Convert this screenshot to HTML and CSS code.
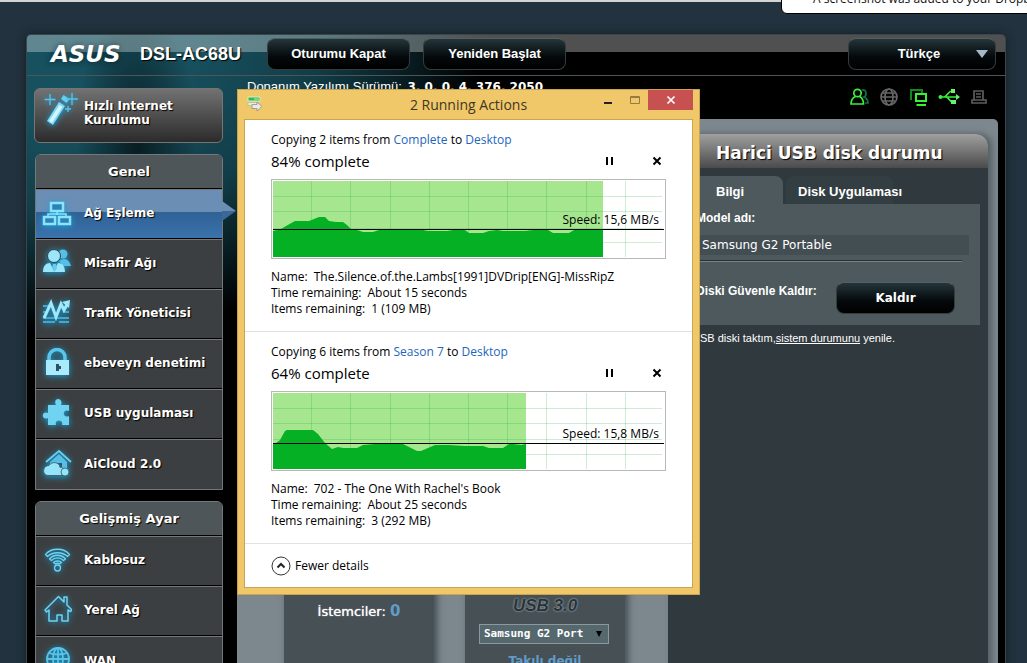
FILE: index.html
```html
<!DOCTYPE html>
<html lang="tr">
<head>
<meta charset="utf-8">
<title>ASUS DSL-AC68U</title>
<link rel="stylesheet" href="styles.css">
</head>
<body>
<div class="toast">A screenshot was added to your Dropbox</div>
<div class="router">
  <header class="top">
    <span class="logo">ASUS</span>
    <h1 class="model">DSL-AC68U</h1>
    <button class="pill">Oturumu Kapat</button>
    <button class="pill">Yeniden Başlat</button>
    <div class="lang">
      <select class="pill" aria-label="Dil"><option>Türkçe</option></select>
      <svg class="caret" viewBox="0 0 12 8"><path d="M0 0h12L6 8z" fill="#a3bac9"/></svg>
    </div>
  </header>
  <div class="columns">
    <nav class="side">
      <a class="quick" href="#">
        <svg class="icon" viewBox="0 0 34 34"><path d="M3 28 15 9l6 4L9 32z" fill="#7fd8f5"/><path d="M5 28 15.500 12l3 2L8 30z" fill="#d4f6ff"/><path d="M17 6l2.500-4 6 4-3 4z" fill="#62d0f5"/><path d="M6 1v11M.5 6.500h11M28 0v12M22 6h12M24 13v6M21 16h6" stroke="#53c8ec" stroke-width="1.300"/></svg>
        <span>Hızlı Internet Kurulumu</span>
      </a>
      <section class="menu">
        <h2>Genel</h2>
        <a class="active" href="#"><svg class="icon" viewBox="0 0 30 30"><path d="M9 5h12v8H9zM2 19h11v7H2zM17 19h11v7H17z" fill="#2c82b8" stroke="#8ce4fb" stroke-width="2.500"/><path d="M15 14v3M6 18v-2h18v2" fill="none" stroke="#8ce4fb" stroke-width="1.500"/></svg>Ağ Eşleme</a>
        <a href="#"><svg class="icon" viewBox="0 0 30 30"><circle cx="21" cy="6" r="4.500" fill="#55bfe5"/><path d="M17 13c7-4 10-1 12 5h-8z" fill="#55bfe5"/><circle cx="12" cy="8" r="6.500" fill="#9be6fa" stroke="#3b3f41"/><path d="M1 24c0-6 3-9 7-9l4 8 4-8c5 0 7 4 7 9z" fill="#9be6fa"/><path d="M11 16h3l1 4-2.500 4L10 20z" fill="#65cdf0"/></svg>Misafir Ağı</a>
        <a href="#"><svg class="icon" viewBox="0 0 30 30"><path d="M1 8h7M21 14h6M1 14h5M1 20h26M1 24h12M17 24h10" stroke="#3fa9d0" stroke-width="2"/><path d="M2 20 9 5l5 14 5-13 3 6 4-7" fill="none" stroke="#a0e9fb" stroke-width="3"/><path d="M20 4l8-2-1 8z" fill="#a0e9fb"/></svg>Trafik Yöneticisi</a>
        <a href="#"><svg class="icon" viewBox="0 0 30 30"><path d="M7 13V9.500a8 8 0 0 1 16 0V13" fill="none" stroke="#59c7eb" stroke-width="3.500"/><path d="M4 12h23v15H4z" fill="#a9ebfb"/><path d="M14 16h3v2h2v3h-2v2h-3z" fill="#2c5261"/></svg>ebeveyn denetimi</a>
        <a href="#"><svg class="icon" viewBox="0 0 30 30"><path d="M6 7h8c-4-8 8-8 5 0h8v6c-7-3-7 8 0 5v9h-7c2-6-8-6-6 0H6v-7c-7 3-7-8 0-5z" fill="#70d3f2"/></svg>USB uygulaması</a>
        <a href="#"><svg class="icon" viewBox="0 0 30 30"><path d="M4 13 17 2l12 11" fill="none" stroke="#65cdef" stroke-width="2"/><path d="M8 13l9-8 8 8v9H8z" fill="#55bfe5"/><path d="M14 14h6v4h-6z" fill="#31576a"/><path d="M6 26.500c-6 0-6-10 1-10 3-5 11-3 11 2 3-1 4 2 3 4 5-1 6 4 1 4z" fill="#96e4f8" stroke="#345666" stroke-width=".8"/><circle cx="23" cy="23" r="4" fill="#96e4f8" stroke="#345666" stroke-width=".8"/></svg>AiCloud 2.0</a>
      </section>
      <section class="menu">
        <h2>Gelişmiş Ayar</h2>
        <a href="#"><svg class="icon" viewBox="0 0 30 30"><g fill="none" stroke="#6fd3f3" stroke-width="1.300" stroke-linejoin="round"><path d="M3.500 9.500c6-7 18-7 24 0l-2 2c-5-5-15-5-20 0z"/><path d="M7.500 14c4-5 12-5 16 0l-2 1.500c-3-3.500-9-3.500-12 0z"/><path d="M11.500 17.500c2-2 6-2 8 0l-2 1.500c-1-1-3-1-4 0z"/><circle cx="15.500" cy="23" r="3"/></g></svg>Kablosuz</a>
        <a href="#"><svg class="icon" viewBox="0 0 30 30"><path d="M3 15 16.500 1.500 22 7V2h3v8l5 5-1.500 1.500L26 15v11h-6v-6h-5v6H7V15l-2.500 2z" fill="none" stroke="#6fd3f3" stroke-width="1.500" stroke-linejoin="round"/></svg>Yerel Ağ</a>
        <a href="#"><svg class="icon" viewBox="0 0 30 30"><g fill="none" stroke="#58c4e9" stroke-width="1.800"><circle cx="16" cy="13" r="11"/><ellipse cx="16" cy="13" rx="5" ry="11"/><path d="M16 2v22M5 13h22M7 7c5 2 13 2 18 0M7 19c5-2 13-2 18 0"/></g></svg>WAN</a>
      </section>
    </nav>
    <main class="main">
      <div class="info">
        <span class="firmware">Donanım Yazılımı Sürümü: <b>3. 0. 0. 4. 376. 2050</b></span>
        <div class="status">
          <svg viewBox="0 0 22 20"><g fill="none" stroke-width="1.700"><path d="M14 3c5-1 5 6 2 7 2 1 4 3 4 6h-3" stroke="#0d7346"/><circle cx="9.500" cy="6" r="3.700" stroke="#3cf03c"/><path d="M7.500 9.500C4 11 3 13 3 17h12.500c0-4-1-6-4-7.500" stroke="#3cf03c"/></g></svg>
          <svg viewBox="0 0 22 20"><g fill="none" stroke="#666" stroke-width="1.700"><circle cx="11" cy="10" r="8"/><ellipse cx="11" cy="10" rx="4" ry="8"/><path d="M3 10h16M4.500 6h13M4.500 14h13"/></g></svg>
          <svg viewBox="0 0 22 20"><path d="M4 12H3V3h11v3" fill="none" stroke="#0e8a1c" stroke-width="2"/><path d="M8 7h10v7H8zM8.500 18H18" fill="none" stroke="#35f335" stroke-width="2"/></svg>
          <svg viewBox="0 0 22 20"><g fill="none" stroke="#36f13a" stroke-width="1.700"><path d="M2 10h17M6 10c3 0 4-6 8-6M8 10c3 0 3 5 7 5"/></g><path d="M22 10l-4-3v6zM13 2h4v4h-4zM13 13h5v4h-5z" fill="#66f56a"/><circle cx="2.500" cy="10" r="2" fill="#36f13a"/></svg>
          <svg viewBox="0 0 22 20"><path d="M6 13V4h9v9M4 13h14v3H4zM8 7h5M8 10h5" fill="none" stroke="#5c5c5c" stroke-width="1.700"/></svg>
        </div>
      </div>
      <div class="board">
        <div class="map">
          <div class="card"><p class="clients">İstemciler: <b>0</b></p></div>
          <div class="card">
            <p class="usb">USB 3.0</p>
            <div class="disk">
              <select aria-label="USB 3.0"><option>Samsung G2 Port</option></select>
              <svg viewBox="0 0 6 6"><path d="M0 0h6L3 6z"/></svg>
            </div>
            <p class="none">Takılı değil</p>
          </div>
        </div>
        <section class="panel">
          <h2>Harici USB disk durumu</h2>
          <div class="tabs"><button class="on">Bilgi</button><button>Disk Uygulaması</button></div>
          <div class="sheet">
            <p class="label">Model adı:</p>
            <p class="value">Samsung G2 Portable</p>
            <div class="eject"><label class="label" for="eject">Diski Güvenle Kaldır:</label><button class="pill" id="eject">Kaldır</button></div>
          </div>
          <p class="note">USB diski taktım,<a href="#">sistem durumunu</a> yenile.</p>
        </section>
      </div>
    </main>
  </div>
</div>

<div class="window" role="dialog" aria-labelledby="wt" lang="en">
  <div class="titlebar">
    <svg class="app" viewBox="0 0 16 16"><path d="M1 1h12v4H1z" fill="#35b845" stroke="#d7efd4"/><path d="M7 3h5" stroke="#b6f5b0"/><path d="M1 6.500h9v3H1z" fill="#e4eee0" stroke="#a3b69b" stroke-width=".6"/><path d="M5 8.500h5V6l5 4.500-5 4.500v-2.500H5z" fill="#e9e9e9" stroke="#8f8f8f" stroke-width=".8"/></svg>
    <span id="wt">2 Running Actions</span>
    <div class="controls">
      <button aria-label="Minimize"><svg viewBox="0 0 12 12"><path d="M2 9h8" stroke="#222" stroke-width="2"/></svg></button>
      <button aria-label="Maximize"><svg viewBox="0 0 12 12"><path d="M1.500 2.500h9v7h-9zM1.500 3.500h9" fill="none" stroke="#967b3d"/></svg></button>
      <button class="close" aria-label="Close"><svg viewBox="0 0 12 12"><path d="M2.500 2.500l7 7M9.500 2.500l-7 7" stroke="#fff" stroke-width="1.700"/></svg></button>
    </div>
  </div>
  <div class="client">
    <section class="job">
      <p>Copying 2 items from <a href="#">Complete</a> to <a href="#">Desktop</a></p>
      <div class="progress"><span>84% complete</span>
        <button aria-label="Pause"><svg viewBox="0 0 12 12"><path d="M3 2v8M8 2v8" stroke="#000" stroke-width="2"/></svg></button>
        <button aria-label="Cancel"><svg viewBox="0 0 12 12"><path d="M2.500 2.500l7 7M9.500 2.500l-7 7" stroke="#000" stroke-width="2"/></svg></button>
      </div>
      <div class="graph">
        <svg viewBox="0 0 391 76" preserveAspectRatio="none">
          <path d="M0 0h330v76H0z" fill="#a6e68f"/>
          <path d="M0 15.500h389M0 30.500h389M0 47.500h389M0 61.500h389M38.500 0v76M77.500 0v76M117.500 0v76M156.500 0v76M195.500 0v76M234.500 0v76M273.500 0v76M313.500 0v76M352.500 0v76" fill="none" stroke="#06a02c" stroke-opacity=".2"/>
          <path d="M0 50 8 48 13 45 22 40H36L46 36H52L56 40 63 41H70L74 44 79 49H84L90 51H100L106 49H150L155 50H174L180 49H192L196 52H210L216 50 224 49 230 50H252L260 49H275L280 52H296L301 49H330V76H0Z" fill="#06b025"/>
          <path d="M0 48.500h391" stroke="#000"/>
        </svg>
        <span>Speed: 15,6 MB/s</span>
      </div>
      <dl><div><dt>Name:</dt><dd>The.Silence.of.the.Lambs[1991]DVDrip[ENG]-MissRipZ</dd></div><div><dt>Time remaining:</dt><dd>About 15 seconds</dd></div><div><dt>Items remaining:</dt><dd>1 (109 MB)</dd></div></dl>
    </section>
    <section class="job low">
      <p>Copying 6 items from <a href="#">Season 7</a> to <a href="#">Desktop</a></p>
      <div class="progress"><span>64% complete</span>
        <button aria-label="Pause"><svg viewBox="0 0 12 12"><path d="M3 2v8M8 2v8" stroke="#000" stroke-width="2"/></svg></button>
        <button aria-label="Cancel"><svg viewBox="0 0 12 12"><path d="M2.500 2.500l7 7M9.500 2.500l-7 7" stroke="#000" stroke-width="2"/></svg></button>
      </div>
      <div class="graph">
        <svg viewBox="0 0 391 76" preserveAspectRatio="none">
          <path d="M0 0h253v76H0z" fill="#a6e68f"/>
          <path d="M0 15.500h389M0 30.500h389M0 46.500h389M0 61.500h389M38.500 0v76M77.500 0v76M117.500 0v76M156.500 0v76M195.500 0v76M234.500 0v76M273.500 0v76M313.500 0v76M352.500 0v76" fill="none" stroke="#06a02c" stroke-opacity=".2"/>
          <path d="M0 50H3L7 47 12 38 14 37H40L45 41 52 50 59 56 65 54 70 55H84L90 52 102 51H130L136 54 144 58H148L155 55 162 52H176L192 53H210L216 55H230L236 51H240L248 52 253 51V76H0Z" fill="#06b025"/>
          <path d="M0 50.500h391" stroke="#000"/>
        </svg>
        <span>Speed: 15,8 MB/s</span>
      </div>
      <dl><div><dt>Name:</dt><dd>702 - The One With Rachel's Book</dd></div><div><dt>Time remaining:</dt><dd>About 25 seconds</dd></div><div><dt>Items remaining:</dt><dd>3 (292 MB)</dd></div></dl>
    </section>
    <button class="fewer"><svg viewBox="0 0 20 20"><circle cx="10" cy="10" r="9" fill="none" stroke="#333"/><path d="M6.500 11.500 10 8l3.500 3.500" fill="none" stroke="#222" stroke-width="2"/></svg>Fewer details</button>
  </div>
</div>
</body>
</html>
```
FILE: styles.css
```css
* { box-sizing: border-box; }
body {
  margin: 0;
  height: 100vh;
  overflow: hidden;
  padding: 32px 21px 0 26px;
  border-top: 2px solid #d4d6d6;
  background: #22323e;
  color: #fff;
  font-family: "DejaVu Sans", Verdana, sans-serif;
  font-size: 12px;
}
h1, h2, p, dl, dd { margin: 0; }
button, select { font: inherit; color: inherit; border: 0; background: none; padding: 0; }
a { color: inherit; text-decoration: none; }

.toast {
  position: absolute;
  top: -20px;
  right: -20px;
  width: 266px;
  padding: 10px 0 6px 31px;
  border: 1px solid #000;
  border-radius: 6px;
  background: #fff;
  color: #111;
  font: 12px/16px "Open Sans", sans-serif;
  white-space: nowrap;
}

/* Router page */
.router {
  min-height: 100%;
  border: 1px solid #39464c;
  border-bottom: 0;
  border-radius: 5px 5px 0 0;
  background:
    radial-gradient(ellipse 60px 150px at 110px 110px, #061216cc, transparent),
    radial-gradient(ellipse 420px 300px at 40px 0, #17505e 30%, #123d48 60%, #000000 100%) #000;
  box-shadow: 0 0 10px #0006;
}
.top {
  display: flex;
  align-items: center;
  height: 41px;
  padding: 0 9px 3px 24px;
  border-bottom: 1px solid #4d5559;
  border-radius: 4px 4px 0 0;
  background: linear-gradient(#ffffff50 0 17px, transparent 17px);
}
.logo { width: 89px; font-size: 23px; font-weight: bold; font-style: italic; line-height: 24px; text-shadow: 0 0 6px #0008; }
.model { width: 127px; font: bold 18px/24px "Liberation Sans", Arial, sans-serif; text-shadow: 1px 1px 1px #000; }
.pill {
  height: 32px;
  border: 1px solid #353c3e;
  border-top-color: #52605f;
  border-radius: 8px;
  background: linear-gradient(#24353a, #04090b 60%, #000);
  font: bold 13px "Liberation Sans", Arial, sans-serif;
  text-align: center;
  cursor: pointer;
}
.top button { width: 143px; margin-right: 13px; }
.lang { position: relative; width: 148px; margin-left: auto; }
.lang .pill { width: 100%; appearance: none; text-align: center; text-align-last: center; padding: 0 6px 0 0; }
.caret { position: absolute; right: 8px; top: 12px; width: 12px; height: 8px; pointer-events: none; }

.columns { display: flex; gap: 14px; padding: 0 7px; }
.side { flex: 0 0 189px; padding-top: 12px; font-weight: bold; text-shadow: 1px 1px 1px #000; }
.quick {
  display: flex;
  gap: 6px;
  height: 55px;
  padding: 4px 9px;
  border: 1px solid #757575;
  border-radius: 6px;
  background: linear-gradient(#727272, #2b2b2b);
  line-height: 14px;
}
.quick .icon { width: 34px; height: 34px; }
.quick span { padding-top: 6px; width: 100px; }
.icon { flex: none; width: 30px; height: 30px; filter: drop-shadow(0 1px 3px #16a3dc); }
.menu { margin: 11px 0 0 1px; border: 1px solid #73797b; border-radius: 6px 6px 0 0; background: #3b3f41; }
.menu h2 { height: 34px; border-bottom: 1px solid #000; border-radius: 5px 5px 0 0; background: #4e5659; font-size: 13px; line-height: 34px; text-align: center; }
.menu a { position: relative; display: flex; align-items: center; gap: 12px; height: 50px; padding: 0 6px 2px; border-top: 1px solid #73797b; border-bottom: 1px solid #000; }
.menu a:last-child { border-bottom: 0; }
.menu .active { background: linear-gradient(#6b8eb5 22px, #2f6195 22px, #3b73ac); }
.active::after {
  content: "";
  position: absolute;
  left: 100%;
  top: 11px;
  width: 14px;
  height: 20px;
  clip-path: polygon(0 0, 100% 50%, 0 100%);
  background: linear-gradient(#6b8eb5 50%, #3b6799 50%);
}

.main { flex: 1; min-width: 0; }
.info { display: flex; justify-content: space-between; height: 43px; padding: 4px 8px 0 10px; }
.firmware { font: 13px/14px "Liberation Sans", Arial, sans-serif; }
.firmware b { font: bold 12px "DejaVu Sans", Verdana, sans-serif; margin-left: 2px; }
.status { display: flex; gap: 8px; padding-top: 7px; }
.status svg { width: 22px; height: 20px; }
.board { display: flex; min-height: 560px; padding: 15px 10px 0 0; border-radius: 0 5px 0 0; background: #7c888d; }
.map { flex: 1; display: grid; grid-template-columns: 15fr 16fr; gap: 31px; padding: 0 43px 0 47px; }
.card { padding-top: 460px; background: #475155; box-shadow: 3px 0 7px #444c50; text-align: center; }
.clients { padding: 9px 0 0; font-size: 13px; line-height: 16px; text-shadow: 0 0 1px #fff; }
.clients b { color: #609ccb; font-size: 15px; text-shadow: none; }
.usb { color: #263238; font: italic bold 17px/23px "Liberation Sans Narrow", "Liberation Sans", sans-serif; text-shadow: 0 0 2px #c9d5d9; }
.disk { position: relative; width: 130px; margin: 7px 0 8px 14px; }
.disk select { display: block; width: 100%; height: 20px; padding: 0 0 2px 4px; appearance: none; border: 1px solid #8b999e; border-radius: 0; background: #55686e; font: bold 11px "DejaVu Sans Mono", monospace; }
.disk svg { position: absolute; right: 7px; top: 7px; width: 6px; height: 6px; pointer-events: none; }
.none { color: #609ccb; font-weight: bold; line-height: 18px; }

.panel { flex: 0 0 320px; background: #2f393e; border-radius: 12px 12px 0 0; box-shadow: 4px 0 6px #555f64; font-family: "Liberation Sans", Arial, sans-serif; }
.panel h2 { height: 34px; padding-left: 48px; border-radius: 12px 12px 0 0; background: linear-gradient(#a0a0a0, #4b4b4b); font: bold 17px/38px "DejaVu Sans", Verdana, sans-serif; text-shadow: 1px 1px 1px #000; white-space: nowrap; }
.tabs { display: flex; gap: 3px; padding: 8px 8px 0; }
.tabs button { width: 107px; height: 28px; padding: 3px 0 0 12px; border-radius: 8px 8px 0 0; background: #333e43; font-size: 13px; font-weight: bold; white-space: nowrap; text-align: left; }
.tabs .on { padding-left: 40px; background: #4d595d; }
.sheet { margin: 0 8px; min-height: 121px; padding: 5px 11px 10px 20px; background: #4d595d; }
.label { font-size: 12px; font-weight: bold; line-height: 18px; }
.value { margin-top: 8px; height: 20px; padding-left: 6px; background: #434e53; font: 12px/20px "DejaVu Sans", Verdana, sans-serif; }
.eject { display: flex; justify-content: space-between; margin: 6px 7px 0 0; padding-top: 20px; border-top: 1px solid #778286; box-shadow: 0 -1px #263136; }
.eject .pill { width: 119px; margin-right: 7px; font: bold 12px "DejaVu Sans", Verdana, sans-serif; }
.note { padding: 5px 0 0 24px; font-size: 11px; line-height: 16px; }
.note a { text-decoration: underline; }

/* File copy window */
.window {
  position: absolute;
  left: 237px;
  top: 89px;
  width: 463px;
  padding: 0 6px 6px;
  border: 1px solid #c9a552;
  background: #f0c869;
  color: #000;
  font: 12px/16px "Open Sans", "Segoe UI", sans-serif;
}
.titlebar { position: relative; height: 29px; color: #3f3724; font-size: 14px; line-height: 30px; text-align: center; }
.app { position: absolute; left: 3px; top: 6px; width: 16px; height: 16px; }
.controls { position: absolute; right: 0; top: 0; display: flex; height: 20px; }
.controls button { display: grid; place-items: center; width: 27px; }
.controls .close { width: 45px; background: #c75050; }
.controls svg, .progress svg { width: 12px; height: 12px; }
.client { border: 1px solid #c9a552; background: #fff; }
.job { padding: 12px 26px 14px; border-bottom: 1px solid #e2e2e2; }
.job a { color: #1e66bd; }
.progress { display: flex; align-items: center; height: 26px; padding-right: 3px; font-size: 15px; }
.progress span { flex: 1; }
.progress button { display: grid; width: 12px; margin-left: 35px; }
.graph { position: relative; height: 80px; margin-top: 5px; padding: 1px; border: 1px solid #b8b8b8; }
.graph svg { display: block; width: 100%; height: 100%; }
.graph span { position: absolute; right: 6px; top: 32px; }
.low .graph span { top: 34px; }
.job dl { margin-top: 10px; }
.job dl div { display: flex; gap: 6px; white-space: nowrap; }
.fewer { display: flex; align-items: center; gap: 4px; height: 43px; padding-left: 26px; }
.fewer svg { width: 20px; height: 20px; }
```
